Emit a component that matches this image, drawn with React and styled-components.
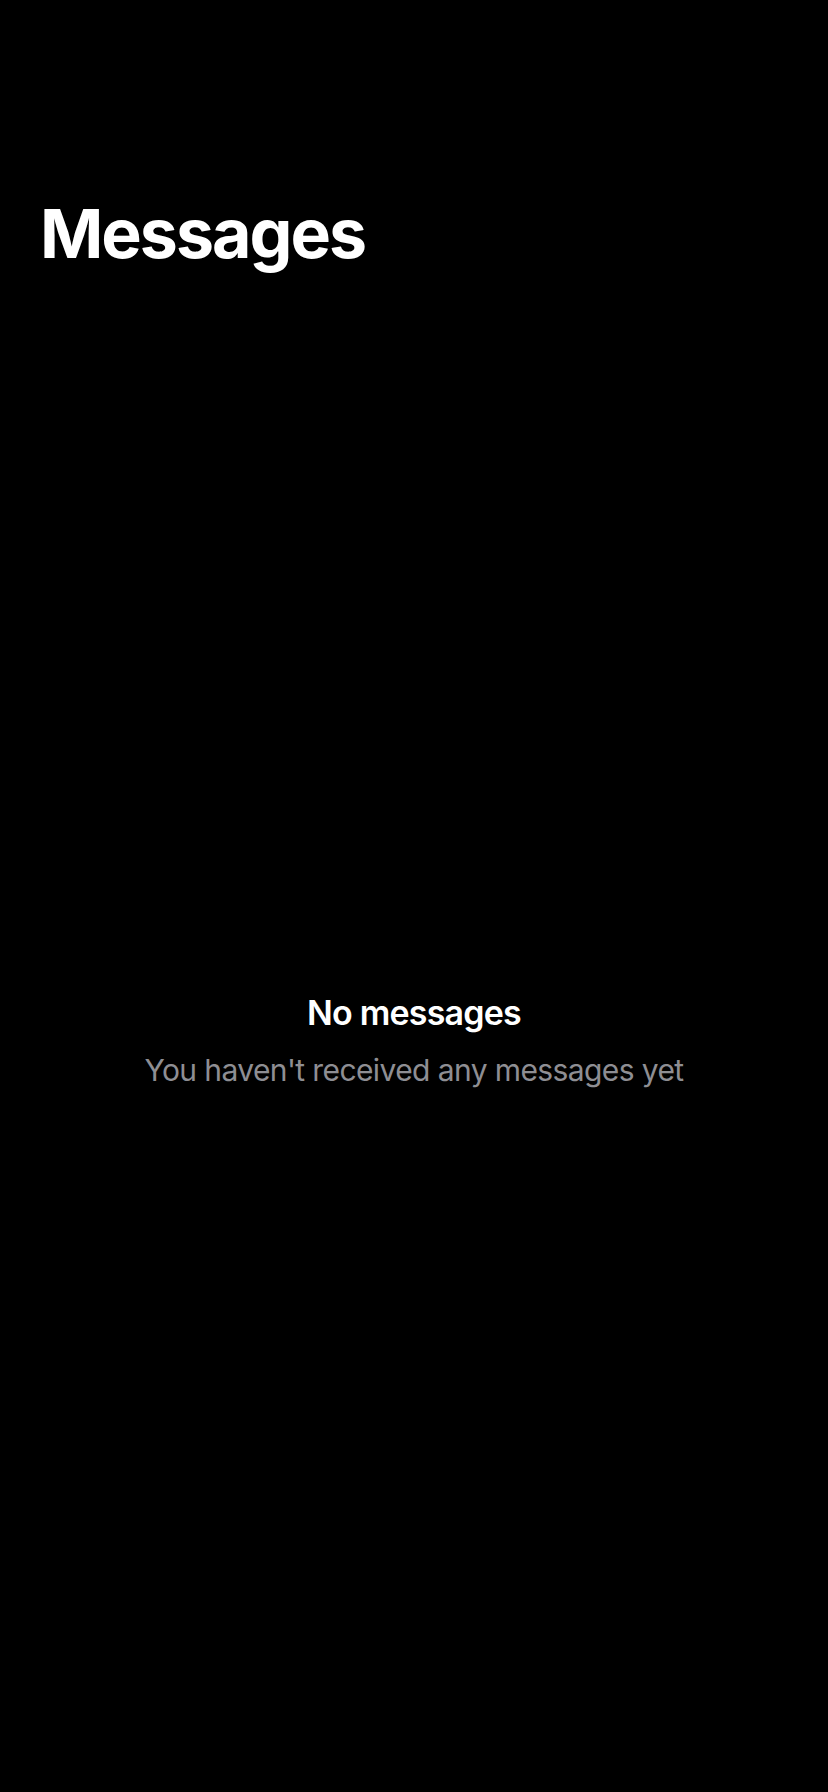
import React from "react";
import styled, { createGlobalStyle } from "styled-components";

const GlobalStyle = createGlobalStyle`
  html, body {
    margin: 0;
    padding: 0;
    background: #000;
  }
  body {
    font-family: Inter, "Noto Sans", "Liberation Sans", sans-serif;
    -webkit-font-smoothing: antialiased;
  }
`;

const Screen = styled.div`
  min-height: 1792px;
  width: 828px;
  background: #000;
  color: #fff;
  display: flex;
  flex-direction: column;
`;

const Header = styled.header`
  padding: 192px 40px 0 40px;
`;

const Title = styled.h1`
  margin: 0;
  font-size: 68px;
  line-height: 82px;
  font-weight: 700;
  letter-spacing: -2px;
`;

const EmptyState = styled.div`
  display: flex;
  flex-direction: column;
  align-items: center;
  gap: 19px;
  padding-top: 718px;
  text-align: center;
`;

const EmptyTitle = styled.div`
  font-size: 34px;
  line-height: 41px;
  font-weight: 600;
  letter-spacing: -0.8px;
`;

const EmptyText = styled.div`
  font-size: 30px;
  line-height: 36px;
  font-weight: 400;
  letter-spacing: -0.6px;
  color: #8e8e93;
`;

export default function App() {
  return (
    <>
      <GlobalStyle />
      <Screen>
        <Header>
          <Title>Messages</Title>
        </Header>
        <EmptyState>
          <EmptyTitle>No messages</EmptyTitle>
          <EmptyText>You haven't received any messages yet</EmptyText>
        </EmptyState>
      </Screen>
    </>
  );
}
